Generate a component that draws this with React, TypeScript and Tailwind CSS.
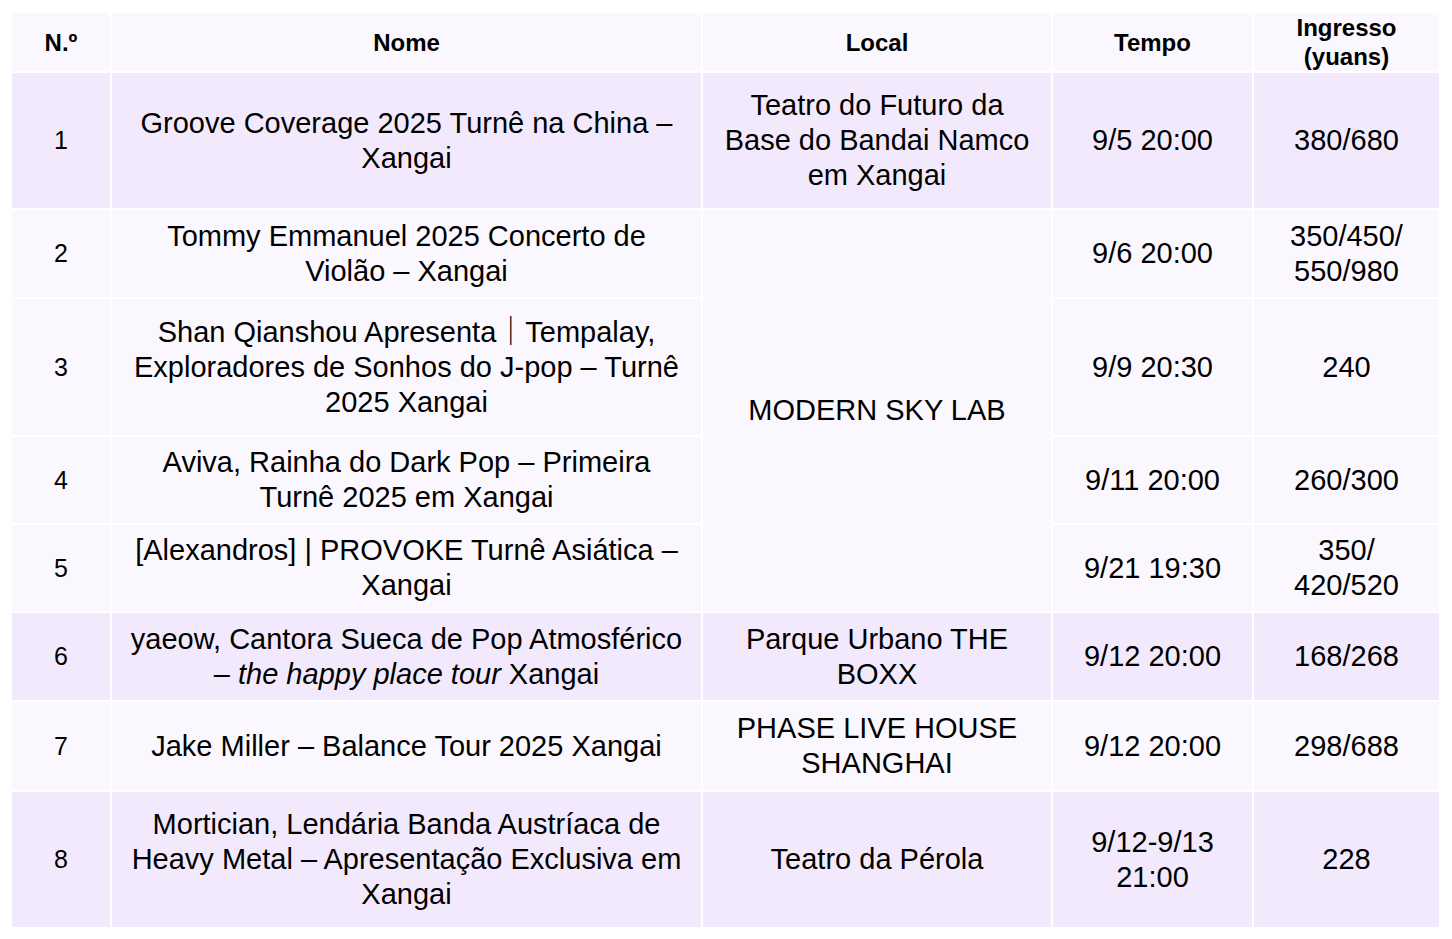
import type { ReactNode } from "react";

type Row = {
  no: string;
  name: ReactNode;
  local?: ReactNode;
  localSpan?: number;
  time: ReactNode;
  price: ReactNode;
  height: number;
  purple: boolean;
};

const rows: Row[] = [
  {
    no: "1",
    name: (
      <>
        Groove Coverage 2025 Turnê na China –<br />
        Xangai
      </>
    ),
    local: (
      <>
        Teatro do Futuro da
        <br />
        Base do Bandai Namco
        <br />
        em Xangai
      </>
    ),
    time: "9/5 20:00",
    price: "380/680",
    height: 135,
    purple: true,
  },
  {
    no: "2",
    name: (
      <>
        Tommy Emmanuel 2025 Concerto de
        <br />
        Violão – Xangai
      </>
    ),
    local: "MODERN SKY LAB",
    localSpan: 4,
    time: "9/6 20:00",
    price: (
      <>
        350/450/
        <br />
        550/980
      </>
    ),
    height: 87,
    purple: false,
  },
  {
    no: "3",
    name: (
      <>
        Shan Qianshou Apresenta｜Tempalay,
        <br />
        Exploradores de Sonhos do J-pop – Turnê
        <br />
        2025 Xangai
      </>
    ),
    time: "9/9 20:30",
    price: "240",
    height: 136,
    purple: false,
  },
  {
    no: "4",
    name: (
      <>
        Aviva, Rainha do Dark Pop – Primeira
        <br />
        Turnê 2025 em Xangai
      </>
    ),
    time: "9/11 20:00",
    price: "260/300",
    height: 86,
    purple: false,
  },
  {
    no: "5",
    name: (
      <>
        [Alexandros] | PROVOKE Turnê Asiática –
        <br />
        Xangai
      </>
    ),
    time: "9/21 19:30",
    price: (
      <>
        350/
        <br />
        420/520
      </>
    ),
    height: 86,
    purple: false,
  },
  {
    no: "6",
    name: (
      <>
        yaeow, Cantora Sueca de Pop Atmosférico
        <br />– <i>the happy place tour</i> Xangai
      </>
    ),
    local: (
      <>
        Parque Urbano THE
        <br />
        BOXX
      </>
    ),
    time: "9/12 20:00",
    price: "168/268",
    height: 87,
    purple: true,
  },
  {
    no: "7",
    name: "Jake Miller – Balance Tour 2025 Xangai",
    local: (
      <>
        PHASE LIVE HOUSE
        <br />
        SHANGHAI
      </>
    ),
    time: "9/12 20:00",
    price: "298/688",
    height: 88,
    purple: false,
  },
  {
    no: "8",
    name: (
      <>
        Mortician, Lendária Banda Austríaca de
        <br />
        Heavy Metal – Apresentação Exclusiva em
        <br />
        Xangai
      </>
    ),
    local: "Teatro da Pérola",
    time: (
      <>
        9/12-9/13
        <br />
        21:00
      </>
    ),
    price: "228",
    height: 135,
    purple: true,
  },
];

export default function App() {
  return (
    <div
      className="min-h-screen bg-white pl-[10px] pt-[11px] text-black"
      style={{ fontFamily: '"Liberation Sans", Arial, "Noto Sans CJK SC", sans-serif' }}
    >
      <table className="table-fixed border-separate border-spacing-[2px] text-center">
        <colgroup>
          <col className="w-[98px]" />
          <col className="w-[589px]" />
          <col className="w-[348px]" />
          <col className="w-[199px]" />
          <col className="w-[185px]" />
        </colgroup>
        <thead>
          <tr className="bg-[#faf8fe] text-[24px] font-bold leading-[29px]">
            <th className="h-[58px] p-0 align-middle">N.º</th>
            <th className="p-0 align-middle">Nome</th>
            <th className="p-0 align-middle">Local</th>
            <th className="p-0 align-middle">Tempo</th>
            <th className="p-0 align-middle">
              Ingresso
              <br />
              (yuans)
            </th>
          </tr>
        </thead>
        <tbody className="text-[29px] leading-[35px]">
          {rows.map((row) => {
            const bg = row.purple ? "bg-[#f2eafc]" : "bg-[#faf8fe]";
            return (
              <tr key={row.no}>
                <td className={`${bg} p-0 align-middle text-[25px]`} style={{ height: row.height }}>
                  {row.no}
                </td>
                <td className={`${bg} p-0 align-middle whitespace-nowrap`}>{row.name}</td>
                {row.local !== undefined && (
                  <td rowSpan={row.localSpan ?? 1} className={`${bg} p-0 align-middle whitespace-nowrap`}>
                    {row.local}
                  </td>
                )}
                <td className={`${bg} p-0 align-middle whitespace-nowrap`}>{row.time}</td>
                <td className={`${bg} p-0 align-middle whitespace-nowrap`}>{row.price}</td>
              </tr>
            );
          })}
        </tbody>
      </table>
    </div>
  );
}
